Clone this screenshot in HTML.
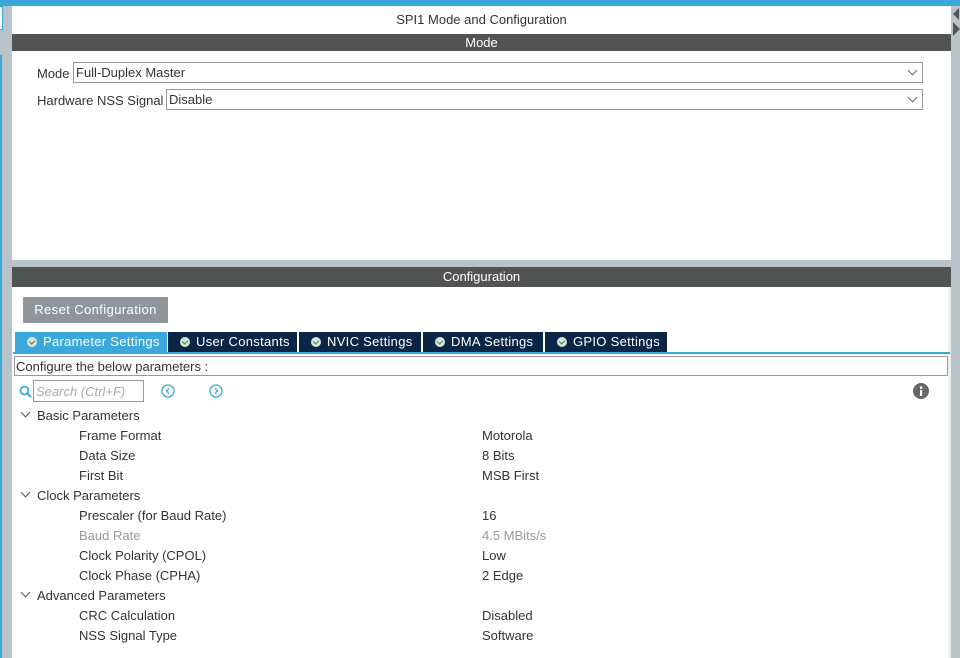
<!DOCTYPE html>
<html><head><style>
*{margin:0;padding:0;box-sizing:border-box}
body{width:960px;height:658px;overflow:hidden;background:#fff;font-family:"Liberation Sans",sans-serif;font-size:12.5px;color:#333;position:relative}
.a{position:absolute}
.sel{position:absolute;border:1px solid #999;height:21px;background:#fff;padding:2px 0 0 2px;font-size:13px}
.sel:after{content:"";position:absolute;right:6px;top:4px;width:6px;height:6px;border-right:1px solid #666;border-bottom:1px solid #666;transform:rotate(45deg)}
.tab{position:absolute;top:332px;height:20px;background:#0a2546;color:#fff;font-size:13px;padding:2px 0 0 12px;white-space:nowrap;letter-spacing:0.3px}
.tab i{display:inline-block;width:10px;height:10px;border-radius:50%;background:#d8e4d8;margin-right:6px;vertical-align:-1px;position:relative}
.tab i:after{content:"";position:absolute;left:3px;top:2px;width:3px;height:4px;border-right:1.5px solid #2e8a3a;border-bottom:1.5px solid #2e8a3a;transform:rotate(45deg)}
.r{position:absolute;font-size:13px}
.g{position:absolute;font-size:13px}
.chev{position:absolute;width:7px;height:7px;border-right:1px solid #555;border-bottom:1px solid #555;transform:rotate(45deg)}
</style></head><body>
<div class="a" style="left:0;top:0;width:960px;height:6px;background:#3aa8da"></div>
<div class="a" style="left:0;top:6px;width:12px;height:652px;background:#b9c4ca"></div>
<div class="a" style="left:0;top:6px;width:3px;height:24px;border:1px solid #3aa8da;border-left:none;background:#fff"></div>
<div class="a" style="left:0;top:55px;width:2px;height:603px;background:#3aa8da"></div>
<div class="a" style="left:951px;top:6px;width:9px;height:652px;background:#b9c4ca"></div>
<div class="a" style="left:953px;top:8px;width:0;height:0;border-top:6px solid transparent;border-bottom:6px solid transparent;border-right:6px solid #555"></div>
<div class="a" style="left:953px;top:22px;width:0;height:0;border-top:7px solid transparent;border-bottom:7px solid transparent;border-left:7px solid #555"></div>
<div class="a" style="left:12px;top:260px;width:939px;height:7px;background:#b9c4ca"></div>
<div class="a" style="left:948px;top:287px;width:3px;height:371px;background:#eee"></div>
<div class="a" style="left:12px;top:12px;width:939px;text-align:center;font-size:13px">SPI1 Mode and Configuration</div>
<div class="a" style="left:12px;top:34px;width:939px;height:17px;background:#525453;color:#fff;text-align:center;font-size:13px;line-height:17px">Mode</div>
<div class="r" style="left:37px;top:66px">Mode</div>
<div class="sel" style="left:73px;top:62px;width:850px">Full-Duplex Master</div>
<div class="r" style="left:37px;top:93px">Hardware NSS Signal</div>
<div class="sel" style="left:166px;top:89px;width:757px">Disable</div>
<div class="a" style="left:12px;top:267px;width:939px;height:20px;background:#525453;color:#fff;text-align:center;font-size:13px;line-height:20px">Configuration</div>
<div class="a" style="left:23px;top:297px;width:145px;height:26px;background:#8e969b;color:#fff;font-size:13px;line-height:26px;text-align:center;letter-spacing:0.4px">Reset Configuration</div>
<div class="tab" style="left:15px;width:152px;background:#3aa8da"><i></i>Parameter Settings</div>
<div class="tab" style="left:168px;width:129px"><i></i>User Constants</div>
<div class="tab" style="left:299px;width:122px"><i></i>NVIC Settings</div>
<div class="tab" style="left:423px;width:120px"><i></i>DMA Settings</div>
<div class="tab" style="left:545px;width:122px"><i></i>GPIO Settings</div>
<div class="a" style="left:13px;top:352px;width:937px;height:2px;background:#3aa8da"></div>
<div class="a" style="left:14px;top:356px;width:934px;height:20px;border:1px solid #999;font-size:13px;padding:2px 0 0 1px">Configure the below parameters :</div>
<svg class="a" style="left:19px;top:385px" width="14" height="14"><circle cx="5.5" cy="5.5" r="4" fill="none" stroke="#3aa8da" stroke-width="1.8"/><line x1="8.5" y1="8.5" x2="12" y2="12" stroke="#3aa8da" stroke-width="2"/></svg>
<div class="a" style="left:33px;top:380px;width:111px;height:22px;border:1px solid #999;color:#aaa;font-style:italic;font-size:13px;padding:3px 0 0 2px">Search (Ctrl+F)</div>
<svg class="a" style="left:161px;top:384px" width="14" height="14"><circle cx="7" cy="7" r="6" fill="none" stroke="#3aa8da" stroke-width="1.3"/><path d="M8 4.5L5.5 7L8 9.5" fill="none" stroke="#3aa8da" stroke-width="1.3"/></svg>
<svg class="a" style="left:209px;top:384px" width="14" height="14"><circle cx="7" cy="7" r="6" fill="none" stroke="#3aa8da" stroke-width="1.3"/><path d="M6 4.5L8.5 7L6 9.5" fill="none" stroke="#3aa8da" stroke-width="1.3"/></svg>
<svg class="a" style="left:913px;top:383px" width="16" height="16"><circle cx="8" cy="8" r="8" fill="#666"/><rect x="7" y="7" width="2.2" height="6" fill="#fff"/><circle cx="8.1" cy="4.6" r="1.3" fill="#fff"/></svg>
<div class="chev" style="left:22px;top:409px"></div><div class="g" style="left:37px;top:408px">Basic Parameters</div>
<div class="r" style="left:79px;top:428px">Frame Format</div><div class="r" style="left:482px;top:428px">Motorola</div>
<div class="r" style="left:79px;top:448px">Data Size</div><div class="r" style="left:482px;top:448px">8 Bits</div>
<div class="r" style="left:79px;top:468px">First Bit</div><div class="r" style="left:482px;top:468px">MSB First</div>
<div class="chev" style="left:22px;top:489px"></div><div class="g" style="left:37px;top:488px">Clock Parameters</div>
<div class="r" style="left:79px;top:508px">Prescaler (for Baud Rate)</div><div class="r" style="left:482px;top:508px">16</div>
<div class="r" style="left:79px;top:528px;color:#999">Baud Rate</div><div class="r" style="left:482px;top:528px;color:#999">4.5 MBits/s</div>
<div class="r" style="left:79px;top:548px">Clock Polarity (CPOL)</div><div class="r" style="left:482px;top:548px">Low</div>
<div class="r" style="left:79px;top:568px">Clock Phase (CPHA)</div><div class="r" style="left:482px;top:568px">2 Edge</div>
<div class="chev" style="left:22px;top:589px"></div><div class="g" style="left:37px;top:588px">Advanced Parameters</div>
<div class="r" style="left:79px;top:608px">CRC Calculation</div><div class="r" style="left:482px;top:608px">Disabled</div>
<div class="r" style="left:79px;top:628px">NSS Signal Type</div><div class="r" style="left:482px;top:628px">Software</div>
</body></html>
